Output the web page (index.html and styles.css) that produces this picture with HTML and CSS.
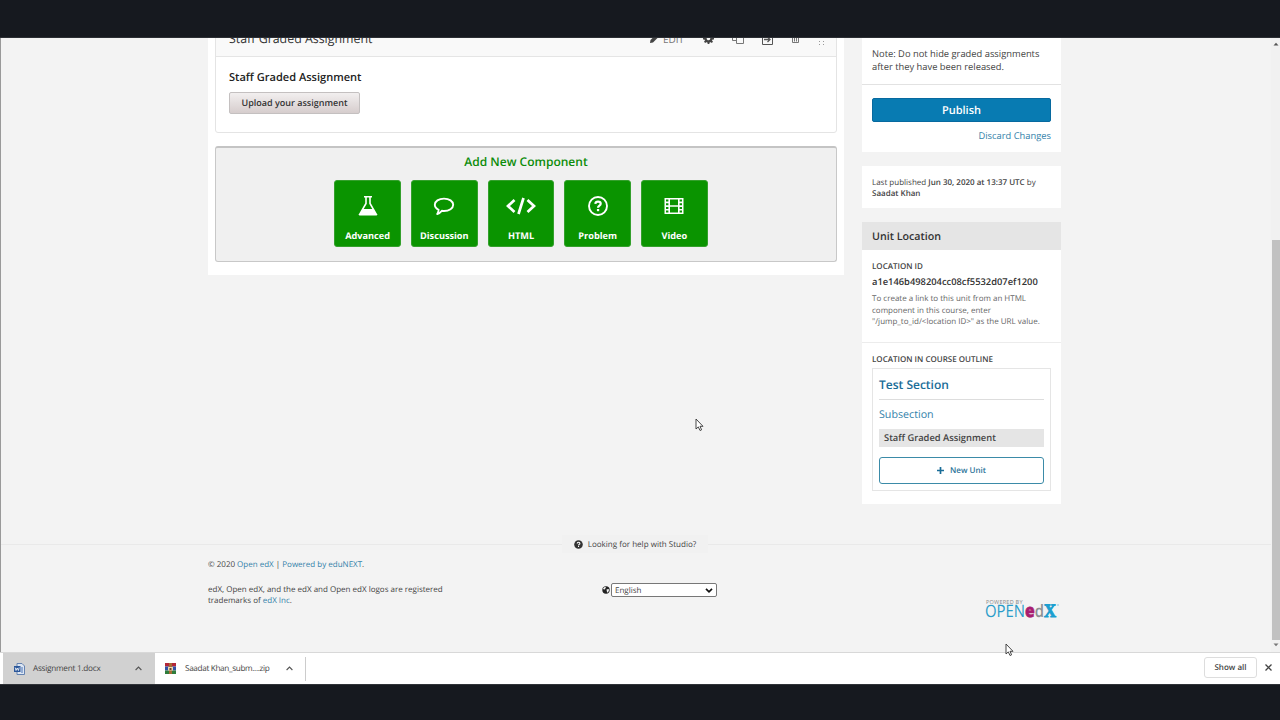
FILE: index.html
```html
<!DOCTYPE html>
<html lang="en">
<head>
  <meta charset="UTF-8">
  <title>Staff Graded Assignment | Studio</title>
  <link rel="stylesheet" href="styles.css">
</head>
<body>
  <div class="letterbox top"></div>

  <div class="viewport">
    <div class="page">
      <div class="content">
        <!-- Unit components -->
        <div class="main">
          <div class="component">
            <div class="component-header">
              <span class="component-title">Staff Graded Assignment</span>
              <div class="actions">
                <svg class="pencil" width="9" height="9" viewBox="0 0 9 9"><path d="M0 9l.5-3L6 .5 8.500 3 3 8.500z" fill="#444"/></svg>
                <span class="edit">EDIT</span>
                <svg class="gear" width="11" height="11" viewBox="0 0 11 11"><circle cx="5.500" cy="5.500" r="3" fill="none" stroke="#444" stroke-width="2.400"/><path d="M5.500 0v2M5.500 9v2M0 5.500h2M9 5.500h2M1.600 1.600l1.400 1.400M8 8l1.400 1.400M1.600 9.400L3 8M8 3l1.400-1.400" stroke="#444" stroke-width="1.800"/></svg>
                <svg class="copy" width="12" height="12" viewBox="0 0 12 12" fill="none" stroke="#777"><path d="M4.500 7.500h-4v-4l3-3h4v4"/><path d="M4.500 4.500h7v6h-7z"/></svg>
                <svg class="move" width="11" height="12" viewBox="0 0 11 12" fill="none" stroke="#555"><path d="M.5 1.500h10v10H.5z"/><path d="M2 6.500h6M5.500 4l2.500 2.500L5.500 9" stroke-width="1.300"/></svg>
                <svg class="trash" width="9" height="11" viewBox="0 0 9 11" fill="none" stroke="#777"><path d="M0 2.500h9M1.500 3v6.500h6V3M3 2V.5h3V2M3.500 4.500v4M5.500 4.500v4"/></svg>
                <svg class="drag" width="6" height="14" viewBox="0 0 6 14" fill="#999"><path d="M0 1h1v1H0zM4 1h1v1H4zM0 5h1v1H0zM4 5h1v1H4zM0 9h1v1H0zM4 9h1v1H4zM0 12h1v1H0zM4 12h1v1H4z"/></svg>
              </div>
            </div>
            <div class="component-body">
              <h3>Staff Graded Assignment</h3>
              <button class="upload">Upload your assignment</button>
            </div>
          </div>

          <div class="new-component">
            <h5>Add New Component</h5>
            <div class="types">
              <button class="type">
                <svg width="20" height="20" viewBox="0 0 20 20"><path d="M6 .8h8M8 1v6.500L1.800 18.200h16.400L12 7.500V1" fill="none" stroke="#fff" stroke-width="1.600"/><path d="M5 13h10l4 6.500H1z" fill="#fff"/></svg>
                <span>Advanced</span>
              </button>
              <button class="type">
                <svg width="22" height="20" viewBox="0 0 22 20"><path d="M11 2.600c5.200 0 9.200 2.700 9.200 6.200s-4 6.200-9.200 6.200c-.8 0-1.500-.1-2.200-.2-1.300 1.500-2.700 2.700-4.600 3.200.9-1.200 1.300-2.600 1.400-4.200C3.300 12.700 1.800 10.900 1.800 8.800c0-3.500 4-6.200 9.200-6.200z" fill="none" stroke="#fff" stroke-width="1.900" stroke-linejoin="round"/></svg>
                <span>Discussion</span>
              </button>
              <button class="type">
                <svg width="30" height="20" viewBox="0 0 30 20"><path d="M8.500 4L2 10l6.500 6M21.500 4l6.500 6-6.500 6M17.500 2l-5 16" fill="none" stroke="#fff" stroke-width="2.700"/></svg>
                <span>HTML</span>
              </button>
              <button class="type">
                <svg width="20" height="20" viewBox="0 0 20 20"><circle cx="10" cy="10" r="9" fill="none" stroke="#fff" stroke-width="1.900"/><path d="M7.300 7.900c.2-1.600 1.300-2.300 2.700-2.300 1.600 0 2.700.8 2.700 2.100 0 1.900-2.700 1.900-2.700 4.100" fill="none" stroke="#fff" stroke-width="2.200"/><path d="M8.900 13h2.300v2.200H8.900z" fill="#fff"/></svg>
                <span>Problem</span>
              </button>
              <button class="type">
                <svg width="20" height="20" viewBox="0 0 20 20"><path d="M.5 2h19v16H.5z" fill="#fff"/><path d="M6 3.500h8v5.700H6zM6 10.800h8v5.700H6zM2 3.500h2.400v2H2zM2 7.200h2.400v2H2zM2 10.900h2.400v2H2zM2 14.500h2.400v2H2zM15.600 3.500H18v2h-2.400zM15.600 7.200H18v2h-2.400zM15.600 10.900H18v2h-2.400zM15.600 14.500H18v2h-2.400z" fill="#0a9400"/></svg>
                <span>Video</span>
              </button>
            </div>
          </div>
        </div>

        <!-- Sidebar -->
        <div class="sidebar">
          <div class="panel publish">
            <p class="note"><span>Note: Do not hide graded assignments</span><br><span class="second">after they have been released.</span></p>
            <div class="publish-actions">
              <button class="publish-button">Publish</button>
              <a class="discard">Discard Changes</a>
            </div>
          </div>

          <div class="panel last-published">
            Last published <b>Jun 30, 2020 at 13:37 UTC</b> by<br><b class="author">Saadat Khan</b>
          </div>

          <div class="panel location">
            <h4>Unit Location</h4>
            <div class="location-id">
              <h5>LOCATION ID</h5>
              <p class="hash">a1e146b498204cc08cf5532d07ef1200</p>
              <p class="tip">To create a link to this unit from an HTML<br>component in this course, enter<br>"/jump_to_id/&lt;location ID&gt;" as the URL value.</p>
            </div>
            <div class="location-outline">
              <h5>LOCATION IN COURSE OUTLINE</h5>
              <div class="outline">
                <a class="section">Test Section</a>
                <a class="subsection">Subsection</a>
                <div class="unit">Staff Graded Assignment</div>
                <button class="new-unit">
                  <svg width="7" height="7" viewBox="0 0 7 7"><path d="M3.500 0v7M0 3.500h7" stroke="#1a6d98" stroke-width="1.700"/></svg>
                  <span>New Unit</span>
                </button>
              </div>
            </div>
          </div>
        </div>
      </div>

      <!-- Help divider -->
      <div class="help">
        <div class="help-link">
          <svg width="9" height="9" viewBox="0 0 9 9"><circle cx="4.500" cy="4.500" r="4.300" fill="#333"/><path d="M3.200 3.600c0-.9.600-1.300 1.300-1.300s1.400.4 1.400 1.100c0 .9-1.300.9-1.300 2" fill="none" stroke="#fff" stroke-width="1.100"/><path d="M4 6h1.100v1.100H4z" fill="#fff"/></svg>
          <span>Looking for help with Studio?</span>
        </div>
      </div>

      <!-- Footer -->
      <div class="footer">
        <div class="legal">
          <p class="copyright">© 2020 <a>Open edX</a> | <a>Powered by eduNEXT</a>.</p>
          <p class="trademark">edX, Open edX, and the edX and Open edX logos are registered<br><span>trademarks of <a>edX Inc</a>.</span></p>
        </div>
        <div class="language">
          <svg width="8" height="8" viewBox="0 0 8 8"><circle cx="4" cy="4" r="3.700" fill="#222"/><path d="M1 2.200l2-1.400 1 .8-1 1.400-1 .8zM4.500 3.500l2-.5.6 1-1 2.200-1 .3z" fill="#f3f3f3"/></svg>
          <div class="select">
            <span>English</span>
            <svg width="8" height="5" viewBox="0 0 8 5"><path d="M1 .8l3 3 3-3" fill="none" stroke="#111" stroke-width="1.700"/></svg>
          </div>
        </div>
        <div class="logo">
          <div class="logo-powered">POWERED BY</div>
          <svg width="76" height="17" viewBox="0 0 76 17">
            <text y="13" textLength="71" lengthAdjust="spacingAndGlyphs"><tspan class="logo-open">OPEN</tspan><tspan class="logo-e">e</tspan><tspan class="logo-d">d</tspan><tspan class="logo-x">X</tspan></text>
            <circle cx="73" cy="1" r=".7" fill="#5bb5d8"/>
          </svg>
        </div>
      </div>
    </div>

    <div class="scrollbar">
      <svg width="6" height="4" viewBox="0 0 6 4"><path d="M.5 3.500L3 .8l2.500 2.700z" fill="#555"/></svg>
      <div class="thumb"></div>
      <svg width="6" height="4" viewBox="0 0 6 4"><path d="M.5.5L3 3.200 5.500.5z" fill="#777"/></svg>
    </div>
  </div>

  <!-- Browser download shelf -->
  <div class="downloads">
    <div class="download active">
      <svg class="file" width="11" height="12" viewBox="0 0 11 12"><path d="M3 .5h5l2.500 2.500v8.500H3z" fill="#dce6f3" stroke="#6482b0"/><path d="M7 5h2M7 7h2M7 9h2" stroke="#4a73b5"/><path d="M0 3h6.500v6H0z" fill="#2b579a"/><path d="M1.200 4.500l.8 3 1.200-2.500 1.200 2.500.8-3" fill="none" stroke="#fff" stroke-width=".8"/></svg>
      <span class="doc-name">Assignment 1.docx</span>
      <svg class="caret" width="7" height="5" viewBox="0 0 7 5"><path d="M.6 4L3.500 1l2.900 3" fill="none" stroke="#555" stroke-width="1.100"/></svg>
    </div>
    <div class="download">
      <svg class="file" width="11" height="11" viewBox="0 0 11 11"><path d="M0 0h11v3.500H0z" fill="#b32638"/><path d="M0 3.500h11v4H0z" fill="#3151a5"/><path d="M0 7.500h11V11H0z" fill="#2f7d3b"/><path d="M4 0h3v11H4z" fill="#a76a35"/><path d="M3 4h5v3.500H3z" fill="#e8d8b0"/><path d="M4.500 5h2v2h-2z" fill="#70402a"/></svg>
      <span class="zip-name">Saadat Khan_subm....zip</span>
      <svg class="caret" width="7" height="5" viewBox="0 0 7 5"><path d="M.6 4L3.500 1l2.900 3" fill="none" stroke="#555" stroke-width="1.100"/></svg>
    </div>
    <div class="separator"></div>
    <button class="show-all">Show all</button>
    <svg class="close" width="7" height="7" viewBox="0 0 7 7"><path d="M.5.5l6 6M6.500.5l-6 6" stroke="#444" stroke-width="1.300"/></svg>
  </div>

  <div class="letterbox bottom"></div>

  <!-- Mouse pointers -->
  <svg class="cursor one" width="9" height="14" viewBox="0 0 9 14"><path d="M1 1v10l2.300-2.100L5 12.500l1.600-.7L5 8.300h3z" fill="#fff" stroke="#333" stroke-width=".9"/></svg>
  <svg class="cursor two" width="9" height="14" viewBox="0 0 9 14"><path d="M1 1v10l2.300-2.100L5 12.500l1.600-.7L5 8.300h3z" fill="#fff" stroke="#333" stroke-width=".9"/></svg>
</body>
</html>
```
FILE: styles.css
```css
* {
  box-sizing: border-box;
}
body {
  margin: 0;
  width: 1280px;
  height: 720px;
  overflow: hidden;
  display: flex;
  flex-direction: column;
  font-family: "Open Sans", sans-serif;
  font-size: 8px;
  text-rendering: geometricPrecision;
  color: #444;
  background: #16191f;
}
h3, h4, h5, p {
  margin: 0;
}
button {
  font-family: inherit;
  text-rendering: inherit;
  padding: 0;
  cursor: pointer;
}
svg {
  display: block;
  flex: none;
}
span, a, h3, h4, h5, button {
  white-space: nowrap;
}
a {
  color: #3382aa;
}
.letterbox {
  background: #16191f;
  flex: none;
}
.top {
  height: 38px;
  border-bottom: 1px solid #2c2f34;
}
.bottom {
  height: 36px;
  border-top: 1px solid #303338;
}
.viewport {
  height: 614px;
  flex: none;
  display: flex;
  overflow: hidden;
  background: #f3f3f3;
  border-left: 1px solid #999;
}
.page {
  width: 1270px;
  overflow: hidden;
}
.content {
  display: flex;
  align-items: flex-start;
  gap: 18px;
  width: 853px;
  height: 497px;
  margin-left: 207px;
}

/* unit components */
.main {
  width: 636px;
  height: 237px;
  padding: 0 7px;
  background: #fff;
}
.component {
  height: 113px;
  margin-top: -18px;
  border: 1px solid #e4e4e4;
  border-radius: 3px;
}
.component-header {
  display: flex;
  align-items: center;
  justify-content: space-between;
  height: 36px;
  padding: 0 11px 0 13px;
  background: #f9f9f9;
  border-bottom: 1px solid #e5e5e5;
}
.component-title {
  font-size: 12.400px;
  color: #333;
}
.actions {
  display: flex;
  align-items: center;
}
.edit {
  margin: 0 19px 0 4px;
  font-size: 10px;
  color: #777;
}
.gear {
  margin-right: 18px;
}
.copy {
  margin-right: 18px;
}
.move {
  margin-right: 18px;
}
.trash {
  margin-right: 19px;
}
.component-body {
  padding: 12px 13px;
}
.component-body h3 {
  font-size: 11.050px;
  font-weight: 600;
  line-height: 18px;
  color: #222;
}
.upload {
  display: block;
  width: 131px;
  height: 22px;
  margin-top: 5px;
  padding-bottom: 2px;
  border: 1px solid #c4c0c0;
  border-radius: 2px;
  background: linear-gradient(#f2efef, #d6cdcd);
  font-size: 9px;
  font-weight: 600;
  color: #333;
}
.new-component {
  display: flex;
  flex-direction: column;
  align-items: center;
  height: 116px;
  margin-top: 13px;
  padding-top: 5px;
  border: 1px solid #c8c8c8;
  border-top: 2px solid #c4c4c4;
  border-radius: 3px;
  background: #f0f0f0;
}
.new-component h5 {
  font-size: 12px;
  font-weight: 600;
  line-height: 17px;
  color: #0c8c09;
}
.types {
  display: flex;
  gap: 10px;
  margin: 10px 10px 0 0;
}
.type {
  display: flex;
  flex-direction: column;
  align-items: center;
  width: 66.700px;
  height: 67px;
  padding-top: 15px;
  border: 1px solid #34a02c;
  border-radius: 3px;
  background: #0a9400;
  color: #fff;
}
.type span {
  margin-top: 13px;
  font-size: 9.200px;
  font-weight: 700;
  line-height: 13px;
}

/* sidebar */
.sidebar {
  width: 199px;
}
.panel {
  background: #fff;
}
.publish {
  height: 114px;
  margin-bottom: 14px;
}
.note {
  height: 47px;
  padding: 9px 10px 0;
  border-bottom: 1px solid #e2e2e2;
  font-size: 9.350px;
  line-height: 13px;
}
.publish-actions {
  display: flex;
  flex-direction: column;
  padding: 13px 10px;
}
.publish-button {
  width: 179px;
  height: 24px;
  border: 1px solid #07699f;
  border-radius: 2px;
  background: #087bb2;
  font-size: 11px;
  font-weight: 600;
  color: #fff;
}
.discard {
  align-self: flex-end;
  margin-top: 7px;
  font-size: 9.350px;
  line-height: 14px;
}
.last-published {
  height: 42px;
  margin-bottom: 14px;
  padding: 11px 10px;
  line-height: 11px;
  font-size: 8px;
}
.last-published b {
  font-weight: 600;
}
.location {
  height: 282px;
}
.location h4 {
  height: 28px;
  padding: 1px 0 0 10px;
  background: #e5e5e5;
  font-size: 10.700px;
  font-weight: 600;
  line-height: 28px;
  color: #333;
}
.location h5 {
  font-size: 8px;
  font-weight: 600;
  line-height: 12px;
}
.location-id {
  height: 93px;
  padding: 11px 10px;
  border-bottom: 1px solid #ececec;
}
.hash {
  margin-top: 2px;
  font-size: 9.330px;
  font-weight: 600;
  line-height: 14px;
  color: #333;
}
.tip {
  margin-top: 4px;
  font-size: 8px;
  line-height: 11.500px;
  white-space: nowrap;
  color: #666;
}
.location-outline {
  padding: 11px 10px;
}
.outline {
  display: flex;
  flex-direction: column;
  width: 179px;
  height: 123px;
  margin-top: 2px;
  padding: 6px 6px;
  border: 1px solid #e5e5e5;
}
.section {
  height: 25px;
  border-bottom: 1px solid #ddd;
  font-size: 12px;
  font-weight: 600;
  line-height: 19px;
  color: #1a6d98;
}
.subsection {
  margin-top: 6px;
  font-size: 10.700px;
  line-height: 18px;
}
.unit {
  height: 18px;
  margin-top: 5px;
  padding-left: 5px;
  background: #e5e5e5;
  font-size: 9.330px;
  font-weight: 600;
  line-height: 18px;
}
.new-unit {
  display: flex;
  align-items: center;
  justify-content: center;
  gap: 6px;
  height: 27px;
  margin-top: 10px;
  border: 1px solid #3b8ba8;
  border-radius: 3px;
  background: #fff;
  font-size: 8px;
  font-weight: 600;
  color: #2b7399;
}

/* footer */
.help {
  display: flex;
  justify-content: center;
  height: 20px;
  padding-right: 2px;
  background: linear-gradient(#e9e9e9, #e9e9e9) 0 9px / 100% 1px no-repeat;
}
.help-link {
  display: flex;
  align-items: center;
  gap: 5px;
  height: 18px;
  padding: 0 12px;
  background: #f1f1f1;
  font-size: 8.050px;
}
.footer {
  display: flex;
  align-items: flex-start;
  width: 853px;
  margin-left: 207px;
  font-size: 8px;
}
.legal {
  width: 394px;
  padding-top: 4px;
}
.copyright {
  line-height: 12px;
}
.trademark {
  margin-top: 13px;
  line-height: 11.300px;
}
.language {
  display: flex;
  align-items: center;
  gap: 1px;
  margin-top: 28px;
}
.select {
  display: flex;
  align-items: center;
  justify-content: space-between;
  width: 106px;
  height: 14px;
  padding: 0 3px;
  border: 1px solid #777;
  border-radius: 2px;
  background: #fff;
}
.logo {
  width: 76px;
  margin: 44px 0 0 268px;
}
.logo-powered {
  padding-left: 1px;
  font-size: 5.500px;
  line-height: 7px;
  letter-spacing: .25px;
  color: #888;
}
.logo svg {
  margin-top: -2px;
}
.logo-open {
  font: 17px "Open Sans", sans-serif;
  fill: #2a9cc9;
}
.logo-e {
  font: 800 18px "Open Sans", sans-serif;
  fill: #a81d70;
  stroke: #a81d70;
  stroke-width: .6;
}
.logo-d {
  font: 600 17px "Open Sans", sans-serif;
  fill: #8d9093;
}
.logo-x {
  font: bold 19px "Liberation Serif", serif;
  fill: #1c9fd0;
  stroke: #1c9fd0;
}

/* browser */
.scrollbar {
  display: flex;
  flex-direction: column;
  align-items: center;
  width: 9px;
  padding: 4px 0 5px;
  background: #f1f1f1;
}
.thumb {
  width: 8px;
  height: 400px;
  margin: 194px 0 3px;
  background: #c1c1c1;
}
.downloads {
  display: flex;
  align-items: center;
  height: 32px;
  flex: none;
  padding-left: 3px;
  border-top: 1px solid #d8d8d8;
  background: #fff;
}
.download {
  display: flex;
  align-items: center;
  width: 150px;
  height: 31px;
  padding: 0 12px 0 10px;
  font-size: 8.200px;
}
.download.active {
  width: 152px;
  padding: 0 13px 0 11px;
  background: #d1d1d1;
}
.download .file {
  margin-right: 8px;
}
.doc-name {
  letter-spacing: -.25px;
}
.zip-name {
  margin-left: 1px;
  letter-spacing: -.35px;
}
.download .caret {
  margin-left: auto;
}
.separator {
  width: 1px;
  height: 24px;
  background: #ccc;
}
.show-all {
  width: 53px;
  height: 21px;
  margin: 0 0 2px auto;
  border: 1px solid #ddd;
  border-radius: 3px;
  background: #fff;
  font-size: 8px;
  font-weight: 600;
  color: #444;
}
.close {
  margin: 0 8px 2px 8px;
}
.cursor {
  position: absolute;
}
.one {
  left: 695px;
  top: 418px;
}
.two {
  left: 1005px;
  top: 643px;
}
```
